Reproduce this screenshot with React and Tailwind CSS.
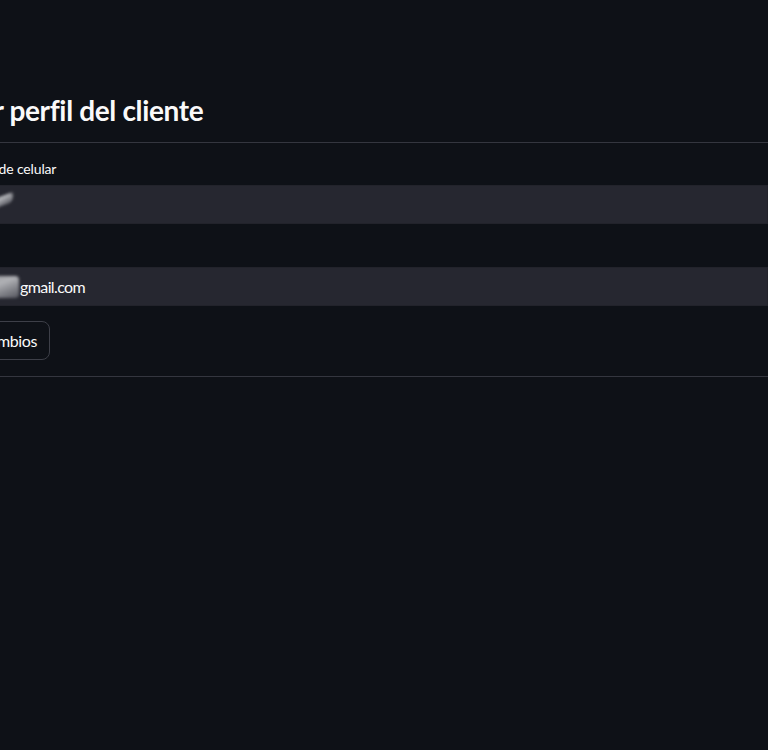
import React from 'react';

const Blur = ({ className }) => (
  <span
    className={`inline-block align-middle rounded-sm bg-gradient-to-br from-[#8a8b90] via-[#b0b1b5] to-[#55565e] blur-[1.5px] ${className}`}
  />
);

const EditarPerfil = () => {
  return (
    <div className="w-[768px] h-[750px] bg-[#0e1117] overflow-hidden font-['Lato','Liberation_Sans',sans-serif] text-[#fafafa]">
      <div className="pt-[93px] w-full">
        {/* titulo */}
        <h3 className="-ml-[68px] text-[28px] leading-[34px] font-bold tracking-[-0.35px] whitespace-nowrap">
          Editar perfil del cliente
        </h3>

        <div className="mt-[15px] border-t border-[#34363f]" />

        {/* formulario */}
        <div className="-ml-[50px] pt-[17px]">
          <label className="block -ml-[4px] text-[14px] leading-[18px] tracking-[-0.15px] whitespace-nowrap">Número de celular</label>
          <div className="mt-[7px] h-[39px] w-[818px] bg-[#262730] border border-[#22232b] flex items-center pl-[12px]">
            <span className="text-[16px] whitespace-nowrap">
              <Blur className="w-[50px] h-[10px] -skew-y-[20deg]" />
            </span>
          </div>

          <label className="block -ml-[4px] mt-[18px] text-[14px] leading-[18px] tracking-[-0.15px] whitespace-nowrap">Correo</label>
          <div className="mt-[7px] h-[39px] w-[818px] bg-[#262730] border border-[#22232b] flex items-center pl-[12px]">
            <span className="text-[16px] tracking-[-0.6px] whitespace-nowrap flex items-center">
              <Blur className="w-[56px] h-[22px] mr-[1px]" />
              <span>gmail.com</span>
            </span>
          </div>

          <div className="mt-[15px] -ml-[38px]">
            <button className="h-[39px] px-[12px] rounded-[8px] border border-[#3d3f48] bg-[#0e1117] text-[16px] tracking-[-0.4px] whitespace-nowrap">
              Guardar cambios
            </button>
          </div>
        </div>

        <div className="mt-[16px] border-t border-[#34363f]" />
      </div>
    </div>
  );
};

export default function App() {
  return <EditarPerfil />;
}
